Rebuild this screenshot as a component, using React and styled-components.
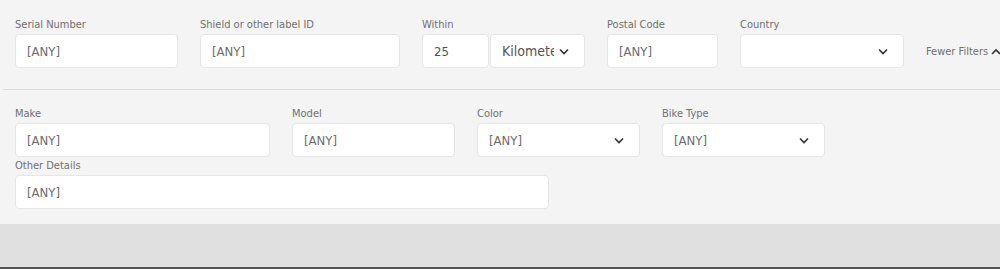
import React from 'react'
import styled, { createGlobalStyle } from 'styled-components'

const GlobalStyle = createGlobalStyle`
  body {
    margin: 0;
    background: #e0e0e0;
    font-family: "DejaVu Sans", sans-serif;
    font-stretch: condensed;
  }
`

const Chevron = ({ up }) => (
  <svg width="10" height="7" viewBox="0 0 10 7">
    <polyline
      points={up ? '1,6 5,2 9,6' : '1,1.5 5,5.5 9,1.5'}
      fill="none"
      stroke="#333"
      strokeWidth="1.6"
    />
  </svg>
)

const Field = ({ label, width, children }) => (
  <FieldBox width={width}>
    <Label>{label}</Label>
    {children}
  </FieldBox>
)

const TextBox = ({ value = '[ANY]', dark }) => <Box><Value dark={dark}>{value}</Value></Box>

const SelectBox = ({ value }) => (
  <Box>
    <Value>{value}</Value>
    <Caret><Chevron /></Caret>
  </Box>
)

export default function App() {
  return (
    <>
      <GlobalStyle />
      <Panel>
        <TopRow>
          <Field label="Serial Number" width={163}><TextBox /></Field>
          <Field label="Shield or other label ID" width={200}><TextBox /></Field>
          <Field label="Within" width={163}>
            <Pair>
              <Narrow width={67}><TextBox value="25" dark /></Narrow>
              <Narrow width={95}>
                <Box>
                  <Clipped>Kilometer</Clipped>
                  <Caret><Chevron /></Caret>
                </Box>
              </Narrow>
            </Pair>
          </Field>
          <Field label="Postal Code" width={111}><TextBox /></Field>
          <Field label="Country" width={164}><SelectBox value="" /></Field>
          <Toggle>Fewer Filters <Chevron up /></Toggle>
        </TopRow>
        <Divider />
        <BottomRow>
          <Field label="Make" width={255}><TextBox /></Field>
          <Field label="Model" width={163}><TextBox /></Field>
          <Field label="Color" width={163}><SelectBox value="[ANY]" /></Field>
          <Field label="Bike Type" width={163}><SelectBox value="[ANY]" /></Field>
          <Break />
          <Field label="Other Details" width={534}><TextBox /></Field>
        </BottomRow>
      </Panel>
      <Footer />
    </>
  )
}

const Panel = styled.section`
  background: #f4f4f4;
  padding: 18px 0 15px 0;
`

const TopRow = styled.div`
  display: flex;
  align-items: flex-end;
  gap: 22px;
  padding-left: 15px;
`

const BottomRow = styled.div`
  display: flex;
  flex-wrap: wrap;
  column-gap: 22px;
  row-gap: 1px;
  padding-left: 15px;
`

const Break = styled.div`
  flex-basis: 100%;
  height: 0;
`

const Divider = styled.hr`
  margin: 21px 0 17px 3px;
  border: 0;
  border-top: 1px solid #dcdcdc;
`

const FieldBox = styled.div`
  display: flex;
  flex-direction: column;
  flex-shrink: 0;
  width: ${p => p.width}px;
`

const Label = styled.label`
  font-size: 11px;
  line-height: 13px;
  color: #707070;
  margin-bottom: 3px;
  white-space: nowrap;
`

const Pair = styled.div`
  display: flex;
  gap: 1px;
`

const Narrow = styled.div`
  width: ${p => p.width}px;
`

const Box = styled.div`
  display: flex;
  align-items: center;
  height: 34px;
  box-sizing: border-box;
  background: #fff;
  border: 1px solid #e6e6e6;
  border-radius: 4px;
  padding: 0 11px;
  overflow: hidden;
`

const Value = styled.span`
  flex: 1;
  font-size: 13px;
  color: ${p => (p.dark ? '#555' : '#6b6b6b')};
  white-space: nowrap;
`

const Clipped = styled.span`
  width: 52px;
  overflow: hidden;
  white-space: nowrap;
  font-size: 14px;
  color: #555;
`

const Caret = styled.span`
  display: flex;
  margin-left: auto;
  padding-right: 4px;
`

const Toggle = styled.div`
  display: flex;
  align-items: center;
  flex-shrink: 0;
  gap: 3px;
  height: 34px;
  font-size: 11px;
  color: #707070;
  white-space: nowrap;
`

const Footer = styled.div`
  height: 43px;
  background: #e0e0e0;
  border-bottom: 2px solid #555;
`
